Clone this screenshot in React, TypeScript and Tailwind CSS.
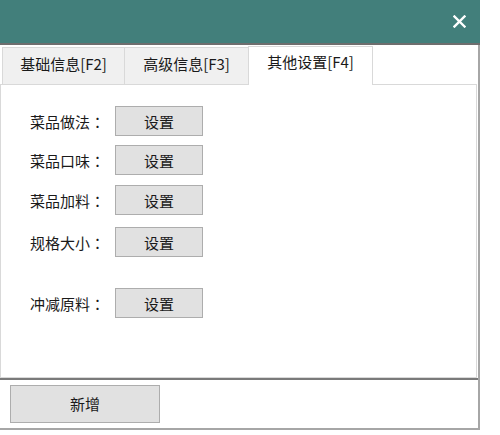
import React from "react";

const font = { fontFamily: '"Microsoft YaHei", "Noto Sans CJK SC", "Noto Sans", sans-serif' };
const tcFont = { fontFamily: '"Noto Sans CJK TC", "Noto Sans CJK SC", sans-serif' };

function Row({ label, mt }: { label: string; mt: string }) {
  return (
    <div className={`flex items-center ${mt}`}>
      <div className="w-[114px] pl-[29px] text-[15px] leading-none text-[#1a1a1a] whitespace-nowrap">
        {label}
        <span style={tcFont}>：</span>
      </div>
      <button className="w-[88px] h-[30px] bg-[#e1e1e1] border border-[#adadad] text-[15px] text-[#1a1a1a] leading-none">
        设置
      </button>
    </div>
  );
}

export default function App() {
  return (
    <div className="w-[500px] h-[435px] bg-white relative overflow-hidden" style={font}>
      <div className="w-[480px] flex flex-col">
        <div className="h-[43px] bg-[#427f7b] flex justify-end items-start pr-[14px] pt-[15px]">
          <svg width="13" height="13" viewBox="0 0 13 13">
            <path d="M1.5 1.5 L11.5 11.5 M11.5 1.5 L1.5 11.5" stroke="white" strokeWidth="2.4" strokeLinecap="square" />
          </svg>
        </div>
        <div className="h-[2px] bg-[#6e6e6e]" />
        <div className="border-r-2 border-[#a6a6a6] flex flex-col">
          <div className="h-[39px] flex items-end pl-[2px]">
            <div className="w-[122px] h-[37px] bg-[#f0f0f0] border-l border-t border-[#d9d9d9] flex items-center justify-center text-[15px] text-[#1a1a1a] pb-[3px]">
              基础信息[F2]
            </div>
            <div className="w-[124px] h-[37px] bg-[#f0f0f0] border-l border-t border-[#d9d9d9] flex items-center justify-center text-[15px] text-[#1a1a1a] pb-[3px]">
              高级信息[F3]
            </div>
            <div className="w-[125px] h-[39px] bg-white border-l border-t border-r border-[#d9d9d9] flex items-center justify-center text-[15px] text-[#1a1a1a] pb-[7px] relative top-[1px]">
              其他设置[F4]
            </div>
          </div>
          <div className="h-[294px] border border-[#d9d9d9] mr-[1px] bg-white pt-[21px]">
            <Row label="菜品做法" mt="mt-0" />
            <Row label="菜品口味" mt="mt-[9px]" />
            <Row label="菜品加料" mt="mt-[10px]" />
            <Row label="规格大小" mt="mt-[12px]" />
            <Row label="冲减原料" mt="mt-[31px]" />
          </div>
          <div className="h-[2px] bg-[#7a7a7a]" />
          <div className="h-[48px] pl-[10px] pt-[5px]">
            <button className="w-[150px] h-[38px] bg-[#e1e1e1] border border-[#adadad] text-[15px] text-[#1a1a1a]">
              新增
            </button>
          </div>
        </div>
        <div className="h-[2px] bg-[#a6a6a6]" />
      </div>
    </div>
  );
}
